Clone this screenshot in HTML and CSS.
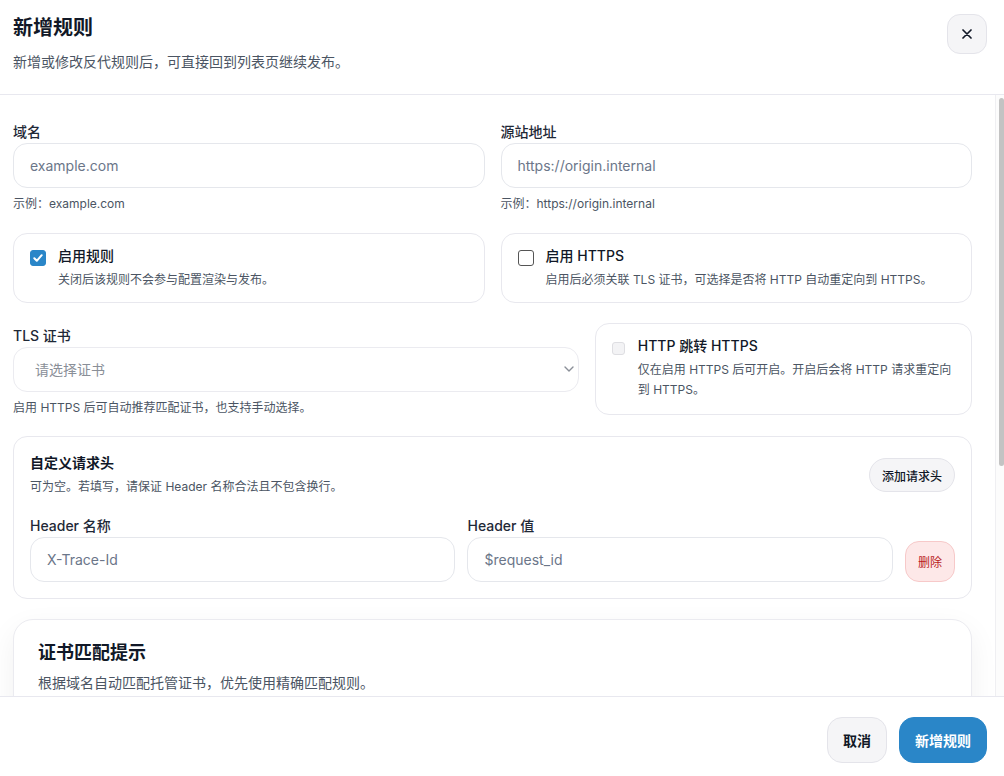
FILE: index.html
```html
<!DOCTYPE html>
<html lang="zh-CN">
<head>
  <meta charset="utf-8">
  <title>新增规则</title>
  <link rel="stylesheet" href="styles.css">
</head>
<body>
  <div class="dialog">
    <header class="dialog-header">
      <div>
        <h1 class="dialog-title">新增规则</h1>
        <p class="dialog-subtitle">新增或修改反代规则后，可直接回到列表页继续发布。</p>
      </div>
      <button class="close-btn" type="button" aria-label="关闭">
        <svg width="10" height="10" viewBox="0 0 10 10"><path d="M1 1l8 8M9 1L1 9" stroke="#111827" stroke-width="1.7" stroke-linecap="round"/></svg>
      </button>
    </header>

    <div class="body-wrap">
      <main class="dialog-body">
        <div class="grid-2">
          <div class="field">
            <label class="field-label">域名</label>
            <input class="text-input" placeholder="example.com">
            <p class="field-help">示例：example.com</p>
          </div>
          <div class="field">
            <label class="field-label">源站地址</label>
            <input class="text-input" placeholder="https://origin.internal">
            <p class="field-help">示例：https://origin.internal</p>
          </div>
        </div>

        <div class="grid-2">
          <label class="toggle-card">
            <span class="check is-on">
              <svg width="12" height="12" viewBox="0 0 12 12"><path d="M2.3 6.3l2.5 2.5 4.9-5.6" fill="none" stroke="#fff" stroke-width="2" stroke-linecap="round" stroke-linejoin="round"/></svg>
            </span>
            <span class="toggle-text">
              <span class="toggle-title">启用规则</span>
              <span class="toggle-desc">关闭后该规则不会参与配置渲染与发布。</span>
            </span>
          </label>
          <label class="toggle-card">
            <span class="check"></span>
            <span class="toggle-text">
              <span class="toggle-title">启用 HTTPS</span>
              <span class="toggle-desc">启用后必须关联 TLS 证书，可选择是否将 HTTP 自动重定向到 HTTPS。</span>
            </span>
          </label>
        </div>

        <div class="grid-tls">
          <div class="field field-tls">
            <label class="field-label">TLS 证书</label>
            <div class="select-wrap">
              <select class="select-input">
                <option>请选择证书</option>
              </select>
              <svg class="select-arrow" width="10" height="6" viewBox="0 0 10 6"><path d="M1 1l4 4 4-4" fill="none" stroke="#8a8f98" stroke-width="1.4" stroke-linecap="round" stroke-linejoin="round"/></svg>
            </div>
            <p class="field-help">启用 HTTPS 后可自动推荐匹配证书，也支持手动选择。</p>
          </div>
          <label class="toggle-card toggle-tall">
            <span class="check is-disabled"></span>
            <span class="toggle-text">
              <span class="toggle-title">HTTP 跳转 HTTPS</span>
              <span class="toggle-desc">仅在启用 HTTPS 后可开启。开启后会将 HTTP 请求重定向到 HTTPS。</span>
            </span>
          </label>
        </div>

        <section class="panel">
          <div class="panel-head">
            <div>
              <h3 class="panel-title">自定义请求头</h3>
              <p class="panel-desc">可为空。若填写，请保证 Header 名称合法且不包含换行。</p>
            </div>
            <button class="pill-btn" type="button">添加请求头</button>
          </div>
          <div class="header-row">
            <div class="field">
              <label class="field-label">Header 名称</label>
              <input class="text-input" placeholder="X-Trace-Id">
            </div>
            <div class="field">
              <label class="field-label">Header 值</label>
              <input class="text-input" placeholder="$request_id">
            </div>
            <button class="danger-btn" type="button">删除</button>
          </div>
        </section>

        <section class="hint-card">
          <h2 class="hint-title">证书匹配提示</h2>
          <p class="hint-desc">根据域名自动匹配托管证书，优先使用精确匹配规则。</p>
        </section>
      </main>
      <div class="scroll-track"><span class="scroll-thumb"></span></div>
    </div>

    <footer class="dialog-footer">
      <button class="btn" type="button">取消</button>
      <button class="btn btn-primary" type="button">新增规则</button>
    </footer>
  </div>
</body>
</html>
```

FILE: styles.css
```css
* { box-sizing: border-box; }
html, body { height: 100%; margin: 0; }
body { font-family: "Inter", "Noto Sans CJK SC", sans-serif; color: #111827; background: #fff; }
button, input, select { font-family: inherit; }

.dialog { height: 100%; display: flex; flex-direction: column; }

/* header */
.dialog-header { display: flex; justify-content: space-between; align-items: flex-start; padding: 14px 17px 21px 13px; border-bottom: 1px solid #e8e8ef; }
.dialog-title { margin: 0; font-size: 20px; line-height: 28px; font-weight: 700; }
.dialog-subtitle { margin: 9px 0 0; font-size: 14px; line-height: 22px; color: #4b5563; }
.close-btn { width: 40px; height: 40px; padding: 0; border: 1px solid #e4e4ea; border-radius: 13px; background: #f5f5f7; display: flex; align-items: center; justify-content: center; }

/* body */
.body-wrap { flex: 1; min-height: 0; position: relative; display: flex; flex-direction: column; }
.dialog-body { flex: 1; min-height: 0; overflow-y: auto; padding: 27px 32px 24px 13px; display: flex; flex-direction: column; gap: 20px; }
.scroll-track { position: absolute; top: 0; right: 0; bottom: 0; width: 9px; border-left: 1px solid #efeff2; background: #fcfcfc; }
.scroll-thumb { position: absolute; top: 3px; right: 0; width: 5px; height: 368px; border-radius: 3px; background: #c3c3c3; }

.grid-2 { display: grid; grid-template-columns: 1fr 1fr; gap: 16px; align-items: start; }
.grid-tls { display: grid; grid-template-columns: 3fr 2fr; gap: 16px; align-items: start; margin-bottom: -1px; }

.field { display: flex; flex-direction: column; min-width: 0; }
.field-tls { padding-top: 3px; }
.field-label { font-size: 14px; line-height: 20px; font-weight: 500; color: #1f2937; margin-bottom: 1px; }
.field-help { margin: 7px 0 0; font-size: 12px; line-height: 18px; color: #4b5563; }

.text-input { height: 45px; width: 100%; padding: 0 16px; border: 1px solid #e5e7ec; border-radius: 14px; font-size: 14px; color: #111827; background: #fff; outline: none; }
.text-input::placeholder { color: #6b7689; }

.select-wrap { position: relative; }
.select-input { appearance: none; -webkit-appearance: none; height: 45px; width: 100%; padding: 0 21px; border: 1px solid #ebebf0; border-radius: 14px; font-size: 14px; color: #8a8f98; background: #fff; outline: none; }
.select-arrow { position: absolute; right: 5px; top: 19px; }

/* checkbox cards */
.toggle-card { display: flex; gap: 12px; padding: 12px 16px; border: 1px solid #e8e8ee; border-radius: 14px; background: #fff; }
.toggle-tall { padding-bottom: 14px; }
.toggle-text { display: flex; flex-direction: column; }
.toggle-title { font-size: 14px; line-height: 20px; font-weight: 500; color: #111827; }
.toggle-desc { margin-top: 4px; font-size: 12px; line-height: 20px; color: #4b5563; }

.check { flex: none; width: 16px; height: 16px; margin-top: 4px; border: 1.5px solid #555; border-radius: 3px; background: #fff; display: flex; align-items: center; justify-content: center; }
.check.is-on { background: #2a86c8; border-color: #2a86c8; }
.check.is-disabled { width: 13px; height: 13px; margin-top: 6px; margin-right: 1px; border: 1px solid #dedee2; background: #f3f3f5; }

/* custom headers */
.panel { padding: 16px; border: 1px solid #e8e8ee; border-radius: 14px; background: #fff; }
.panel-head { display: flex; justify-content: space-between; align-items: center; margin-bottom: 19px; }
.panel-title { margin: 0; font-size: 14px; line-height: 20px; font-weight: 600; }
.panel-desc { margin: 4px 0 0; font-size: 12px; line-height: 20px; color: #4b5563; }
.pill-btn { height: 34px; padding: 0 12px; border: 1px solid #e4e4ea; border-radius: 17px; background: #f5f5f7; font-size: 12px; font-weight: 500; color: #111827; }
.header-row { display: grid; grid-template-columns: 1fr 1fr auto; gap: 12px; align-items: end; }
.danger-btn { height: 41px; padding: 0 12px; border: 1px solid #f7c9c9; border-radius: 14px; background: #fde8e8; font-size: 12px; color: #b91c1c; }

/* hint card */
.hint-card { flex: none; min-height: 180px; padding: 20px 24px; border: 1px solid #ebebf0; border-radius: 20px; background: #fff; box-shadow: 0 10px 30px rgba(15, 23, 42, 0.06); }
.hint-title { margin: 0; font-size: 18px; line-height: 26px; font-weight: 700; }
.hint-desc { margin: 6px 0 0; font-size: 14px; line-height: 22px; color: #4b5563; }

/* footer */
.dialog-footer { display: flex; justify-content: flex-end; gap: 12px; padding: 20px 17px 13px; border-top: 1px solid #e8e8ef; background: #fff; }
.btn { height: 46px; padding: 0 15px; border: 1px solid #e4e4ea; border-radius: 15px; background: #f5f5f7; font-size: 14px; font-weight: 600; color: #111827; }
.btn-primary { background: #2a86c8; border-color: #2a86c8; color: #fff; }
```
